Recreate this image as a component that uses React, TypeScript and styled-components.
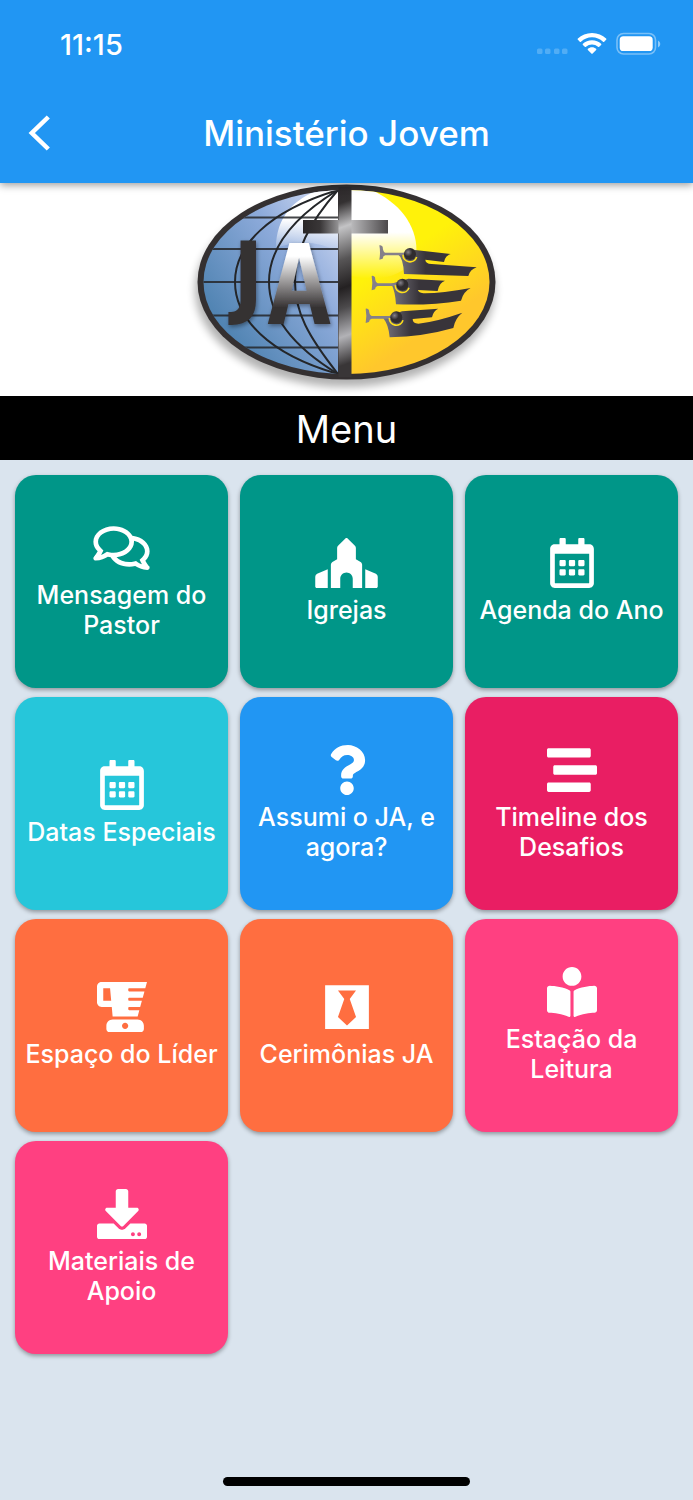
import React from "react";
import styled, { createGlobalStyle } from "styled-components";
import type { IconType } from "react-icons";
import {
  FaBlackTie,
  FaBlender,
  FaBookReader,
  FaDownload,
  FaPlaceOfWorship,
  FaQuestion,
  FaRegCalendarAlt,
  FaRegComments,
  FaStream,
} from "react-icons/fa";

const GlobalStyle = createGlobalStyle`
  *, *::before, *::after { box-sizing: border-box; }
  body {
    margin: 0;
    background: #dae4ee;
    font-family: Inter, "Liberation Sans", sans-serif;
  }
`;

const Screen = styled.div`
  display: flex;
  flex-direction: column;
  min-height: 100vh;
`;

const Header = styled.header`
  position: relative;
  z-index: 1;
  background: #2196f3;
  color: #fff;
  box-shadow: 0 2px 8px rgba(0, 0, 0, 0.4);
`;

const StatusBar = styled.div`
  display: flex;
  align-items: center;
  justify-content: space-between;
  height: 88px;
  padding: 0 32px 0 60px;
`;

const Clock = styled.time`
  font-size: 29px;
  font-weight: 500;
`;

const StatusIcons = styled.div`
  display: flex;
  align-items: center;
  gap: 8px;
`;

const TitleBar = styled.div`
  display: grid;
  grid-template-columns: 80px 1fr 80px;
  align-items: center;
  height: 95px;
  padding-bottom: 5px;
`;

const BackButton = styled.button`
  display: flex;
  align-items: center;
  height: 56px;
  padding: 0 0 0 28px;
  border: 0;
  background: none;
  color: inherit;
  cursor: pointer;
`;

const Title = styled.h1`
  margin: 0;
  font-size: 35px;
  font-weight: 500;
  text-align: center;
`;

const Banner = styled.section`
  display: flex;
  justify-content: center;
  background: #fff;
`;

const MenuHeading = styled.h2`
  margin: 0;
  padding-top: 2px;
  background: #000;
  color: #fff;
  font-size: 38px;
  font-weight: 400;
  line-height: 62px;
  text-align: center;
`;

const MenuGrid = styled.main`
  display: grid;
  grid-template-columns: repeat(3, 1fr);
  gap: 9px 12px;
  padding: 15px;
`;

const Tile = styled.button<{ $color: string; $iconWidth: number }>`
  display: flex;
  flex-direction: column;
  align-items: center;
  justify-content: center;
  gap: 7px;
  aspect-ratio: 1;
  min-width: 0;
  padding: 0 4px;
  border: 0;
  border-radius: 21px;
  background: ${(p) => p.$color};
  color: #fff;
  font-family: inherit;
  font-size: 25px;
  font-weight: 500;
  line-height: 30px;
  box-shadow: 0 2px 4px rgba(0, 0, 0, 0.35);
  cursor: pointer;

  svg {
    flex: none;
    width: ${(p) => p.$iconWidth}px;
    height: 50px;
  }
`;

const TileLabel = styled.span`
  max-width: 200px;
`;

const HomeArea = styled.footer`
  display: flex;
  justify-content: center;
  margin-top: auto;
  padding-bottom: 14px;
`;

const HomeIndicator = styled.div`
  width: 247px;
  height: 9px;
  border-radius: 5px;
  background: #000;
`;

interface MenuItem {
  label: string;
  icon: IconType;
  color: string;
  iconWidth?: number;
}

const items: MenuItem[] = [
  { label: "Mensagem do Pastor", icon: FaRegComments, color: "#009688", iconWidth: 57 },
  { label: "Igrejas", icon: FaPlaceOfWorship, color: "#009688", iconWidth: 63 },
  { label: "Agenda do Ano", icon: FaRegCalendarAlt, color: "#009688" },
  { label: "Datas Especiais", icon: FaRegCalendarAlt, color: "#26c6da" },
  { label: "Assumi o JA, e agora?", icon: FaQuestion, color: "#2196f3" },
  { label: "Timeline dos Desafios", icon: FaStream, color: "#e91e63" },
  { label: "Espaço do Líder", icon: FaBlender, color: "#ff6e40" },
  { label: "Cerimônias JA", icon: FaBlackTie, color: "#ff6e40" },
  { label: "Estação da Leitura", icon: FaBookReader, color: "#ff4081" },
  { label: "Materiais de Apoio", icon: FaDownload, color: "#ff4081" },
];

const Signal = () => (
  <svg width="32" height="22" viewBox="0 0 32 22" fill="#fff" fillOpacity="0.22">
    {[0, 8, 17, 25].map((x) => (
      <rect key={x} x={x} y="15.5" width="5.5" height="5.5" rx="1.5" />
    ))}
  </svg>
);

const Wifi = () => (
  <svg width="30" height="22" viewBox="0 0 30 22">
    <path d="M15 0C20.6 0 25.6 2.2 29.1 5.6Q29.7 6.2 29.1 6.8L27.2 8.7Q26.6 9.2 26 8.7A15.7 15.7 0 0 0 4 8.7Q3.4 9.2 2.8 8.7L0.9 6.8Q0.3 6.2 0.9 5.6C4.4 2.2 9.4 0 15 0Z" fill="#fff" />
    <path d="M15 7.2C18.6 7.2 21.8 8.6 24.1 10.7Q24.7 11.3 24.1 11.9L22.2 13.8Q21.6 14.3 21 13.8A8.8 8.8 0 0 0 9 13.8Q8.4 14.3 7.8 13.8L5.9 11.9Q5.3 11.3 5.9 10.7C8.2 8.6 11.4 7.2 15 7.2Z" fill="#fff" />
    <path d="M15 14.3C16.6 14.3 18 14.9 19.1 15.8Q19.7 16.4 19.1 17L15.6 20.6Q15 21.2 14.4 20.6L10.9 17Q10.3 16.4 10.9 15.8C12 14.9 13.4 14.3 15 14.3Z" fill="#fff" />
  </svg>
);

const Battery = () => (
  <svg width="46" height="24" viewBox="0 0 46 24">
    <rect x="2" y="1.5" width="38.5" height="20.5" rx="6.5" fill="none" stroke="#fff" strokeOpacity="0.4" strokeWidth="1.6" />
    <rect x="4.7" y="4.3" width="33" height="14.7" rx="3.6" fill="#fff" />
    <path d="M43 8.5Q45.3 9.5 45.3 12T43 15.5Z" fill="#fff" fillOpacity="0.5" />
  </svg>
);

const BackIcon = () => (
  <svg width="23" height="36" viewBox="0 0 23 36" fill="none" stroke="#fff" strokeWidth="4.5">
    <path d="M20.3 2L3.8 18L20.3 34" />
  </svg>
);

const Trumpeter = ({ x, y, body }: { x: number; y: number; body: string }) => (
  <g>
    <path d={body} fill="url(#figure)" />
    <path
      d={`M${x - 92} ${y - 26}Q${x - 86} ${y - 28} ${x - 82} ${y - 22}Q${x - 81} ${y - 6} ${x - 74} ${y - 4}H${x - 14}V${y + 4}H${x - 74}Q${x - 81} ${y + 5} ${x - 82} ${y + 14}L${x - 92} ${y + 17}Q${x - 88} ${y - 5} ${x - 92} ${y - 26}Z`}
      fill="#85808a"
    />
    <path d={`M${x - 21} ${y + 2}A21 21 0 0 0 ${x + 20} ${y + 9}`} fill="none" stroke="#ffe01a" strokeWidth="5" />
    <circle cx={x} cy={y} r="18" fill="url(#head)" />
  </g>
);

const Logo = () => (
  <svg width="330" height="213" viewBox="182 183 330 213" role="img" aria-label="JA">
    <defs>
      <linearGradient id="sea" x1="1" y1="0" x2="0" y2="1">
        <stop offset="0" stopColor="#dce2f6" />
        <stop offset="0.35" stopColor="#8eabdb" />
        <stop offset="1" stopColor="#33719f" />
      </linearGradient>
      <linearGradient id="shine" x1="0" y1="0" x2="0" y2="1">
        <stop offset="0.5" stopColor="#fff" />
        <stop offset="1" stopColor="#fff" stopOpacity="0" />
      </linearGradient>
      <linearGradient id="sun" x1="0.2" y1="0" x2="0.7" y2="1">
        <stop offset="0.35" stopColor="#fff20a" />
        <stop offset="0.75" stopColor="#ffc72c" />
      </linearGradient>
      <linearGradient id="post" gradientUnits="userSpaceOnUse" x1="310" y1="190" x2="375" y2="370">
        <stop offset="0" stopColor="#292527" />
        <stop offset="0.12" stopColor="#343132" />
        <stop offset="0.24" stopColor="#c3c3c5" />
        <stop offset="0.4" stopColor="#575556" />
        <stop offset="0.54" stopColor="#242122" />
        <stop offset="0.64" stopColor="#4c4a4c" />
        <stop offset="0.78" stopColor="#b2b2b6" />
        <stop offset="0.92" stopColor="#393637" />
      </linearGradient>
      <linearGradient id="bar">
        <stop offset="0" stopColor="#2a2728" />
        <stop offset="0.2" stopColor="#393637" />
        <stop offset="0.53" stopColor="#c3c3c5" />
        <stop offset="1" stopColor="#4c494b" />
      </linearGradient>
      <linearGradient id="letter" x1="0" y1="239" x2="0" y2="325" gradientUnits="userSpaceOnUse">
        <stop offset="0.2" stopColor="#fff" />
        <stop offset="0.8" stopColor="#353132" />
      </linearGradient>
      <linearGradient id="figure">
        <stop offset="0" stopColor="#77757e" />
        <stop offset="0.35" stopColor="#38343a" />
      </linearGradient>
      <radialGradient id="head" cx="0.35" cy="0.35">
        <stop offset="0" stopColor="#85818a" />
        <stop offset="0.7" stopColor="#302c2e" />
      </radialGradient>
      <clipPath id="globe">
        <ellipse cx="346.5" cy="282" rx="143" ry="92" />
      </clipPath>
      <filter id="soft" x="-10%" y="-10%" width="120%" height="125%">
        <feGaussianBlur stdDeviation="4" />
      </filter>
      <filter id="cast" x="-20%" y="-20%" width="140%" height="140%">
        <feDropShadow dx="1" dy="2" stdDeviation="2" floodOpacity="0.4" />
      </filter>
    </defs>

    <ellipse cx="345" cy="290" rx="150" ry="97" fill="#000" opacity="0.3" filter="url(#soft)" />
    <ellipse cx="346.5" cy="282" rx="149" ry="97.5" fill="#343031" />

    <g clipPath="url(#globe)">
      <rect x="200" y="186" width="138" height="190" fill="url(#sea)" />
      <path d="M338 186C304 190 276 210 276 248Q310 236 338 252Z" fill="url(#shine)" />
      <g fill="none" stroke="#242629" strokeWidth="2">
        <path d="M200 217.5H338M200 249H338M200 282H338M200 315.5H338M200 347.5H338" strokeOpacity="0.85" />
        <path d="M338 190C268 211 235 246 235 282S268 354 338 374" />
        <path d="M338 190C292 218 269 248 269 282S292 346 338 374" />
        <path d="M338 190C308 224 295 252 295 282S308 336 338 374" />
      </g>
      <rect x="351" y="186" width="142" height="190" fill="url(#sun)" />
      <path d="M351 186H360C397 197 420 226 416 257Q396 286 351 276Z" fill="url(#shine)" />
    </g>

    <path d="M303 220H388V233.5H303Z" fill="url(#bar)" />
    <path d="M338.5 187H351.5V377H338.5Z" fill="url(#post)" />

    <g fontFamily="'DejaVu Sans Condensed', 'DejaVu Sans', sans-serif" fontWeight="700" filter="url(#cast)">
      <text x="233" y="307" fontSize="91" fill="#353132">J</text>
      <text x="266" y="324" fontSize="110" fill="url(#letter)" fontFamily="'Liberation Sans Narrow', 'DejaVu Sans Mono', monospace">A</text>
    </g>

    <g transform="translate(340 175) scale(0.3333)">
      <Trumpeter
        x={210}
        y={237}
        body="M174 238Q190 250 192 297L385 303Q390 284 410 277L275 267Q256 266 256 254L312 261Q316 242 332 237L225 225Z"
      />
      <Trumpeter
        x={187}
        y={329}
        body="M154 326Q166 350 168 388Q270 392 363 377Q370 350 392 339Q300 356 250 355Q234 352 234 345L293 348Q297 323 315 317L205 311Z"
      />
      <Trumpeter
        x={169}
        y={427}
        body="M130 430Q146 450 149 487Q250 485 340 459Q345 430 367 413Q290 440 235 446Q218 446 218 432L276 427Q280 407 295 401L186 409Z"
      />
    </g>
  </svg>
);

export default function App() {
  return (
    <Screen>
      <GlobalStyle />
      <Header>
        <StatusBar>
          <Clock>11:15</Clock>
          <StatusIcons>
            <Signal />
            <Wifi />
            <Battery />
          </StatusIcons>
        </StatusBar>
        <TitleBar>
          <BackButton aria-label="Voltar">
            <BackIcon />
          </BackButton>
          <Title>Ministério Jovem</Title>
        </TitleBar>
      </Header>
      <Banner>
        <Logo />
      </Banner>
      <MenuHeading>Menu</MenuHeading>
      <MenuGrid>
        {items.map(({ label, icon: Icon, color, iconWidth = 50 }) => (
          <Tile key={label} $color={color} $iconWidth={iconWidth}>
            <Icon aria-hidden />
            <TileLabel>{label}</TileLabel>
          </Tile>
        ))}
      </MenuGrid>
      <HomeArea>
        <HomeIndicator />
      </HomeArea>
    </Screen>
  );
}
